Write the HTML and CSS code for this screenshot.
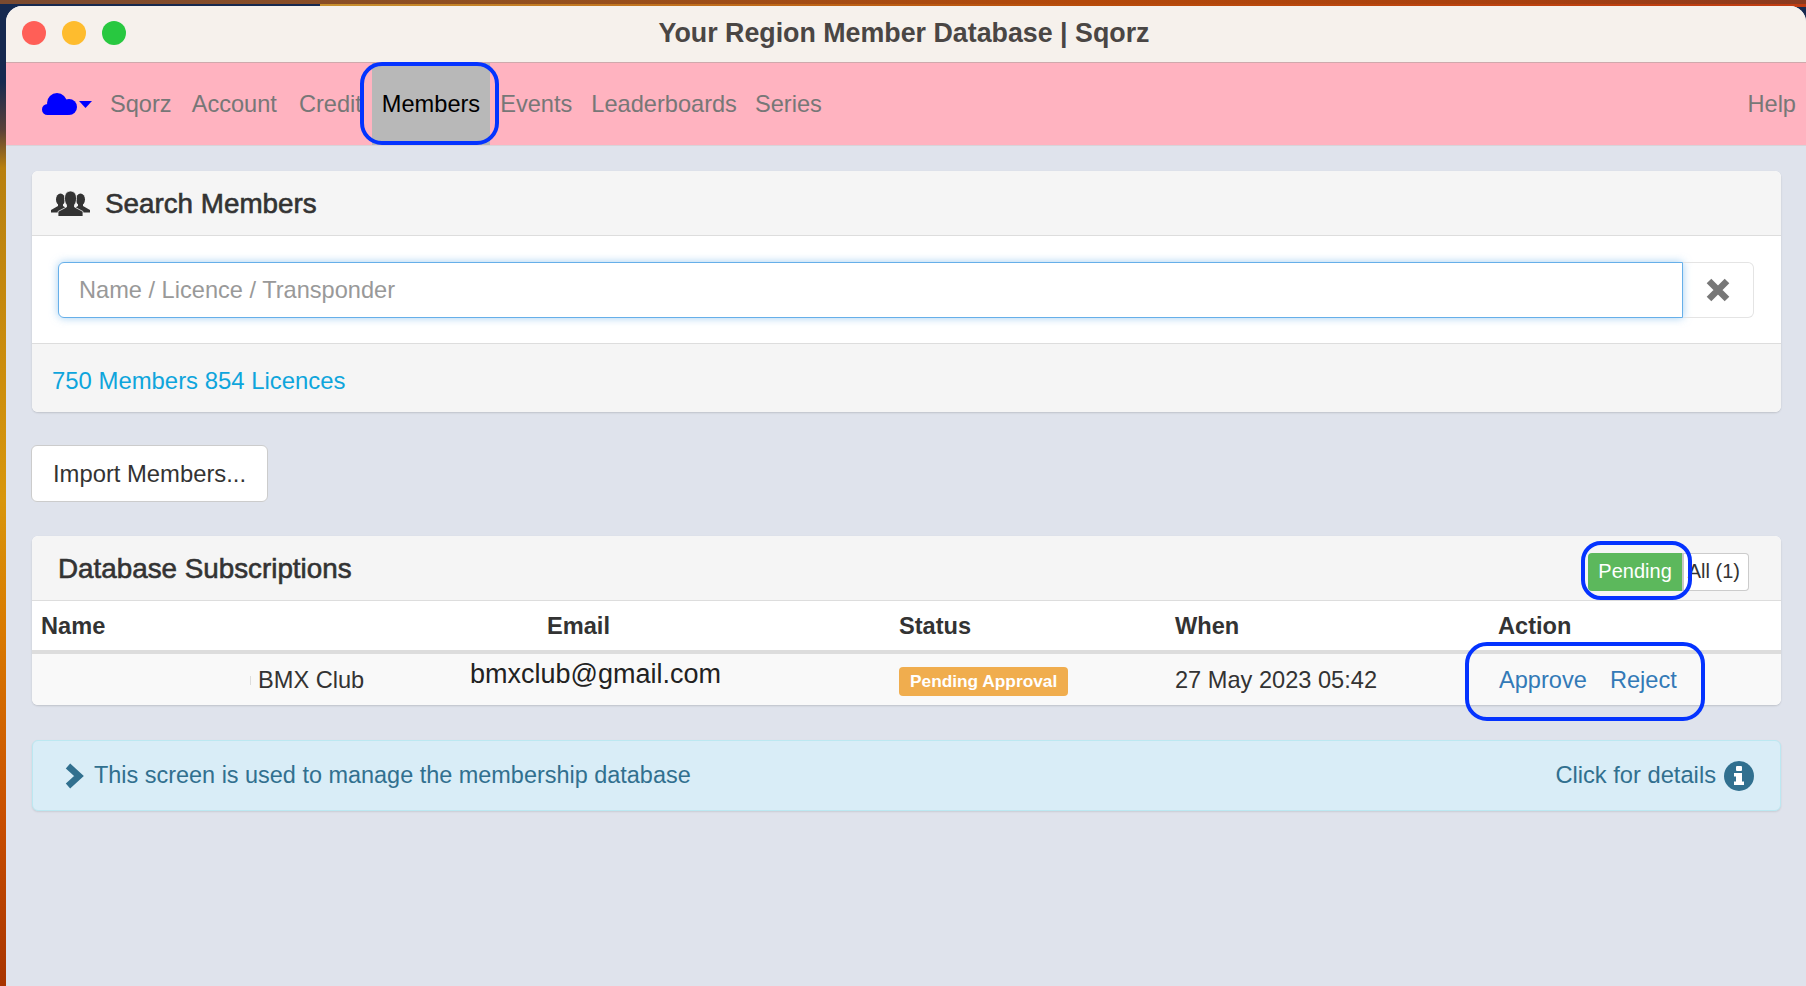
FILE: index.html
```html
<!DOCTYPE html>
<html lang="en">
<head>
  <meta charset="UTF-8">
  <meta name="viewport" content="width=device-width, initial-scale=1.0">
  <title>Your Region Member Database | Sqorz</title>
  <link rel="stylesheet" href="styles.css">
</head>
<body>
  <div class="window">
    <div class="titlebar">
      <div class="lights">
        <span class="light red"></span>
        <span class="light yellow"></span>
        <span class="light green"></span>
      </div>
      <div class="title">Your Region Member Database | Sqorz</div>
    </div>

    <nav class="navbar">
      <a class="brand" href="#">
        <svg class="cloud" width="35" height="22" viewBox="0 0 35 22" fill="#0000ff">
          <circle cx="15" cy="10" r="10"/>
          <circle cx="27" cy="14" r="8"/>
          <circle cx="5.5" cy="16.5" r="5.5"/>
          <rect x="5.5" y="12" width="21" height="10"/>
        </svg>
        <svg class="caret" width="13" height="7" viewBox="0 0 13 7" fill="#0000ff">
          <polygon points="0,0 13,0 6.5,7"/>
        </svg>
      </a>
      <a class="nav-link" href="#">Sqorz</a>
      <a class="nav-link" href="#">Account</a>
      <a class="nav-link nav-credit" href="#">Credit</a>
      <a class="nav-link active" href="#">Members</a>
      <a class="nav-link" href="#">Events</a>
      <a class="nav-link nav-boards" href="#">Leaderboards</a>
      <a class="nav-link nav-series" href="#">Series</a>
      <a class="nav-link help" href="#">Help</a>
    </nav>

    <main class="content">
      <section class="panel">
        <div class="panel-heading search-heading">
          <svg width="39" height="25" viewBox="0 0 39 25" fill="#333">
            <ellipse cx="9.5" cy="8.5" rx="4.5" ry="6"/>
            <path d="M7 13 H12 V15 L17 18 V21.5 H5 L0 21.5 V19 L7 15 Z"/>
            <ellipse cx="29.5" cy="8.5" rx="4.5" ry="6"/>
            <path d="M32 13 H27 V15 L22 18 V21.5 H34 L39 21.5 V19 L32 15 Z"/>
            <path stroke="#f5f5f5" stroke-width="0.8" d="M19.5 0 C23.5 0 25.5 3.5 25.5 7.5 C25.5 10.5 24.5 12.5 23.5 14 V16 L32 20.5 V25.5 H7 V20.5 L15.5 16 V14 C14.5 12.5 13.5 10.5 13.5 7.5 C13.5 3.5 15.5 0 19.5 0 Z"/>
          </svg>
          <h3 class="panel-title">Search Members</h3>
        </div>
        <div class="search-body">
          <input class="search-input" type="text" placeholder="Name / Licence / Transponder">
          <div class="search-clear">
            <svg width="24" height="24" viewBox="0 0 24 24">
              <path d="M3 3 L21 21 M21 3 L3 21" stroke="#777" stroke-width="6.5" fill="none"/>
            </svg>
          </div>
        </div>
        <div class="search-footer">750 Members 854 Licences</div>
      </section>

      <button class="btn-import">Import Members...</button>

      <section class="panel">
        <div class="panel-heading subs-heading">
          <h3 class="panel-title">Database Subscriptions</h3>
          <div class="filter-group">
            <span class="filter pending">Pending</span>
            <span class="filter all">All (1)</span>
          </div>
        </div>
        <div class="table-head">
          <div>Name</div>
          <div>Email</div>
          <div>Status</div>
          <div>When</div>
          <div>Action</div>
        </div>
        <div class="table-row">
          <div class="cell-name">BMX Club</div>
          <div class="cell-email">bmxclub@gmail.com</div>
          <div><span class="badge">Pending Approval</span></div>
          <div>27 May 2023 05:42</div>
          <div class="cell-actions">
            <a href="#">Approve</a>
            <a href="#">Reject</a>
          </div>
        </div>
      </section>

      <section class="info-box">
        <svg width="20" height="26" viewBox="0 0 20 26">
          <polyline points="3,3 14,13 3,23" stroke="#31708f" stroke-width="6.5" fill="none"/>
        </svg>
        <span class="info-text">This screen is used to manage the membership database</span>
        <span class="info-details">Click for details</span>
        <svg class="info-icon" width="30" height="30" viewBox="0 0 30 30">
          <circle cx="15" cy="15" r="15" fill="#31708f"/>
          <rect x="12" y="5" width="6" height="5" rx="1" fill="#fff"/>
          <path d="M10 12 H18 V20.5 H20 V24 H10 V20.5 H12 V15.5 H10 Z" fill="#fff"/>
        </svg>
      </section>
    </main>

    <!-- blue marks drawn over the screenshot -->
    <div class="mark mark-members"></div>
    <div class="mark mark-pending"></div>
    <div class="mark mark-actions"></div>
  </div>
</body>
</html>
```

FILE: styles.css
```css
html, body {
  height: 100%;
}

body {
  margin: 0;
  padding: 6px 0 0 6px;
  box-sizing: border-box;
  overflow: hidden;
  font-family: "Liberation Sans", Arial, sans-serif;
  font-size: 23.6px;
  color: #333;
  background:
    linear-gradient(90deg, #7a4a30 0%, #93501f 30%, #b4490a 60%, #a8400f 85%, #8a3a20 100%) top / 100% 4px no-repeat,
    linear-gradient(90deg, #16294f 0, #16294f 320px, #c8902e 320px, #b84c0a 60%, #c03c12 100%) 0 4px / 100% 3px no-repeat,
    linear-gradient(#16294f 0, #16294f 82px, #5a4038 130px, #b8800f 168px, #d8960c 500px, #d97a00 630px, #c84e00 820px, #a83400 986px);
}

.window {
  position: relative;
  height: 100%;
  display: flex;
  flex-direction: column;
  background-color: #dfe3ec;
  border-radius: 16px 16px 0 0;
  overflow: hidden;
}

.titlebar {
  position: relative;
  flex: 0 0 57px;
  display: flex;
  align-items: center;
  justify-content: center;
  padding: 0 4px 2px 0;
  background-color: #f6f1ec;
  border-bottom: 1px solid #cfa9ac;
  box-sizing: border-box;
}

.lights {
  position: absolute;
  left: 16px;
  display: flex;
  gap: 16px;
}

.light {
  width: 24px;
  height: 24px;
  border-radius: 50%;
}

.red { background-color: #ff5f57; }
.yellow { background-color: #febc2e; }
.green { background-color: #28c840; }

.title {
  font-weight: bold;
  font-size: 26.8px;
  color: #4a4644;
}

.navbar {
  flex: 0 0 83px;
  display: flex;
  align-items: center;
  box-sizing: border-box;
  padding: 0 10px 0 36px;
  background-color: #ffb3c0;
  border-bottom: 1px solid #d8d3d8;
}

.brand {
  display: flex;
  align-items: center;
  gap: 2px;
  margin-right: 8px;
}

.nav-link {
  display: flex;
  align-items: center;
  align-self: stretch;
  padding: 0 10px;
  color: #777;
  text-decoration: none;
}

.nav-credit { margin-left: 2px; }
.nav-boards { margin-left: -1px; }
.nav-series { margin-left: -2px; }

.nav-link.active {
  color: #000;
  background-color: #b8b8b8;
}

.nav-link.help {
  margin-left: auto;
  padding-right: 0;
}

.content {
  flex: 1;
  padding: 25px 25px 0 26px;
}

.panel {
  background-color: #fff;
  border-radius: 6px;
  box-shadow: 0 1px 2px rgba(0, 0, 0, 0.15);
  overflow: hidden;
}

.panel-heading {
  display: flex;
  align-items: center;
  background-color: #f5f5f5;
  border-bottom: 1px solid #ddd;
  box-sizing: border-box;
}

.panel-title {
  margin: 2px 0 0;
  font-size: 27.8px;
  font-weight: normal;
  -webkit-text-stroke: 0.6px #333;
}

.search-heading {
  height: 65px;
  padding-left: 19px;
  gap: 15px;
}

.search-body {
  display: flex;
  height: 108px;
  align-items: center;
  padding: 0 27px 0 26px;
  box-sizing: border-box;
  border-bottom: 1px solid #ddd;
}

.search-input {
  flex: 1;
  height: 56px;
  box-sizing: border-box;
  padding: 2px 20px 0;
  font-family: inherit;
  font-size: 23.6px;
  color: #333;
  border: 1px solid #66afe9;
  border-radius: 6px 0 0 6px;
  box-shadow: 0 0 8px rgba(102, 175, 233, 0.6);
  outline: none;
}

.search-input::placeholder {
  color: #999;
}

.search-clear {
  width: 71px;
  height: 56px;
  box-sizing: border-box;
  display: flex;
  align-items: center;
  justify-content: center;
  border: 1px solid #e4e4e4;
  border-left: none;
  border-radius: 0 6px 6px 0;
}

.search-footer {
  height: 68px;
  box-sizing: border-box;
  display: flex;
  align-items: center;
  padding: 6px 0 0 20px;
  font-size: 23.9px;
  color: #0ea5dc;
  background-color: #f5f5f5;
}

.btn-import {
  display: block;
  height: 57px;
  margin: 33px 0 34px -1px;
  padding: 0 21px;
  font-family: inherit;
  font-size: 23.8px;
  color: #333;
  background-color: #fff;
  border: 1px solid #ccc;
  border-radius: 6px;
}

.subs-heading {
  height: 65px;
  padding: 0 32px 0 26px;
  justify-content: space-between;
}

.filter-group {
  display: flex;
  margin-top: 7px;
  font-size: 20px;
}

.filter {
  height: 38px;
  display: flex;
  align-items: center;
  box-sizing: border-box;
}

.filter.pending {
  padding: 0 10px;
  color: #fff;
  background-color: #5cb85c;
  border-right: 2px solid #c8c8c8;
  border-radius: 4px 0 0 4px;
}

.filter.all {
  padding: 0 8px 0 4px;
  color: #333;
  background-color: #fff;
  border: 1px solid #ccc;
  border-left: none;
  border-radius: 0 4px 4px 0;
}

.table-head,
.table-row {
  display: grid;
  align-items: center;
  box-sizing: border-box;
}

.table-head {
  grid-template-columns: 506px 352px 276px 323px 1fr;
  height: 53px;
  padding: 2px 0 0 9px;
  font-weight: bold;
  border-bottom: 4px solid #ddd;
}

.table-row {
  grid-template-columns: 438px 429px 276px 324px 1fr;
  height: 51px;
  padding-top: 2px;
  background-color: #f9f9f9;
}

.cell-name {
  display: flex;
  align-items: center;
  padding-left: 218px;
}

.cell-name::before {
  content: "";
  width: 1px;
  height: 9px;
  margin-right: 7px;
  background-color: #ddd;
}

.cell-email {
  font-size: 27px;
  padding-bottom: 12px;
  color: #222;
}

.badge {
  display: inline-block;
  padding: 4px 11px;
  font-size: 17.3px;
  font-weight: bold;
  color: #fff;
  background-color: #f0ad4e;
  border-radius: 4px;
}

.cell-actions {
  display: flex;
  gap: 23px;
}

.cell-actions a {
  color: #337ab7;
  text-decoration: none;
}

.info-box {
  display: flex;
  align-items: center;
  height: 71px;
  margin-top: 35px;
  padding: 0 26px 0 32px;
  box-sizing: border-box;
  font-size: 23.45px;
  color: #31708f;
  background-color: #d9edf7;
  border: 1px solid #bce8f1;
  border-radius: 6px;
  box-shadow: 0 1px 2px rgba(0, 0, 0, 0.1);
}

.info-text {
  margin-left: 9px;
}

.info-details {
  margin-left: auto;
  margin-right: 8px;
  font-size: 23.7px;
}

.mark {
  position: absolute;
  box-sizing: border-box;
  border: 4px solid #0433ff;
}

.mark-members {
  left: 354px;
  top: 56px;
  width: 139px;
  height: 83px;
  border-radius: 22px;
}

.mark-pending {
  left: 1575px;
  top: 535px;
  width: 111px;
  height: 59px;
  border-radius: 20px;
}

.mark-actions {
  left: 1459px;
  top: 636px;
  width: 240px;
  height: 79px;
  border-radius: 22px;
}
```
